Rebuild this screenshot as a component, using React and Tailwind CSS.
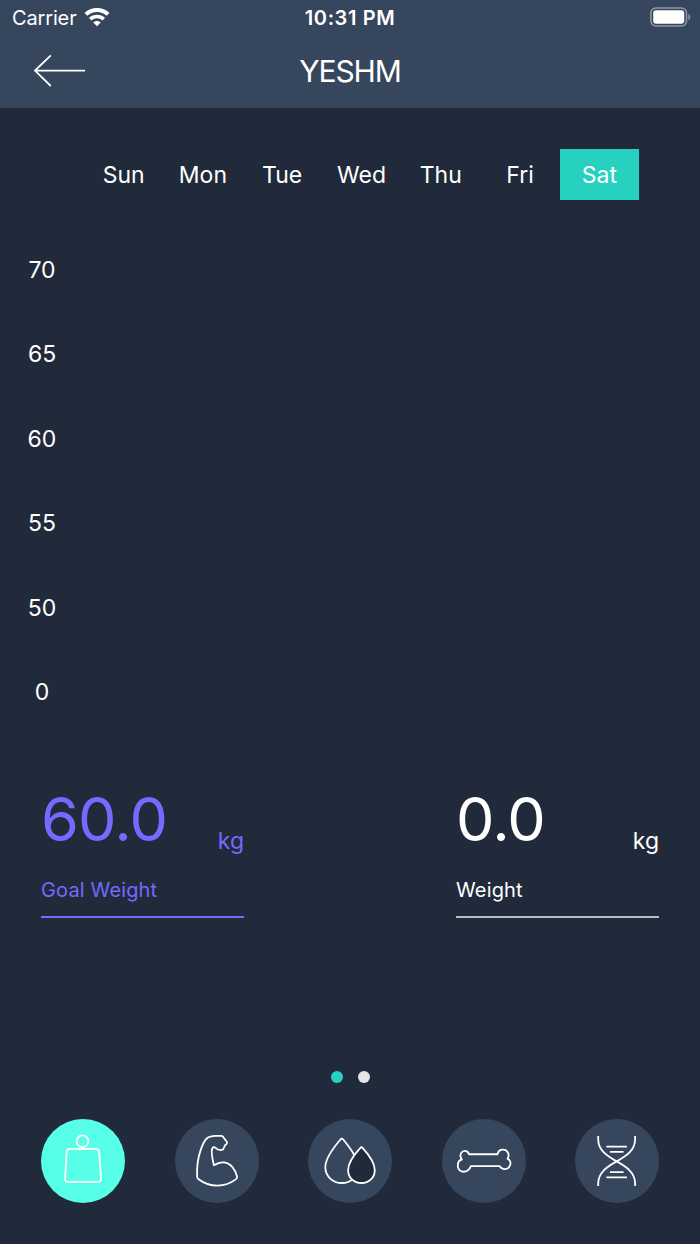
import { useState } from "react"

const days = ["Sun", "Mon", "Tue", "Wed", "Thu", "Fri", "Sat"]
const levels = ["70", "65", "60", "55", "50", "0"]

function WeightIcon() {
  return (
    <>
      <circle cx="41.7" cy="22.4" r="5.9" />
      <path d="M29 30H55.2Q58.2 30 58.4 33L60.3 60Q60.4 63.2 57.2 63.2H27.2Q24 63.2 24.2 60L25.8 33Q26 30 29 30Z" />
    </>
  )
}

function MuscleIcon() {
  return (
    <path d="M32.1 19.3C34 18 38 17.2 40.8 17H46.4Q47.4 17 48.2 17.8L52.2 23.2Q52.7 24.2 51.8 25.1Q49.6 26.5 49.4 28.3Q49 30.7 47 31.1C43.6 31.8 41.6 29.9 40.4 28.7Q39 27.5 37.8 29C35.8 31.8 37.2 38.6 39.1 46.4C46.2 42 53 43.1 57.5 48C60.2 51 61.6 54.6 62.4 58Q62.7 59.4 61.3 60.4C55.9 64.6 49.5 66.8 42.5 67C34.6 66.8 28 63.7 23.4 60.2Q22.3 59.3 22.2 57.6C21.9 48.5 22.8 40 25.5 32C27.2 26.8 29.4 21.5 32.1 19.3Z" />
  )
}

function DropsIcon() {
  return (
    <>
      <path d="M32.6 20.6Q34 18.8 35.4 20.6C42.5 29.2 50.7 40.5 50.7 48.6C50.7 57.6 43 64.3 34 64.3S17.4 57.6 17.4 48.6C17.4 40 25.2 29.2 32.6 20.6Z" />
      <path className="fill-[#212a3b]" d="M52.4 29.2Q53.7 27.6 55 29.2C61.3 36.1 67.1 44.8 67.1 51.4C67.1 58.8 61.2 64.3 53.7 64.3S40.3 58.8 40.3 51.4C40.3 44.8 46 36.1 52.4 29.2Z" />
    </>
  )
}

function BoneIcon() {
  return (
    <path d="M27.1 35.4H55.9C56.3 32.7 58.3 30.8 61.2 30.8C65.8 30.8 68.5 35.6 65.9 40C68.7 41.1 69.3 44 68.4 46.5C66.7 51.3 60.5 51.7 57.7 47.3H29C27.8 50.9 25.1 53 21.4 53C18 53 15.7 50.2 15.9 46.8C16 43.4 17.4 41 20 40.7C17.4 37.6 18.5 33.6 21.4 32.4C23.8 31.5 26.4 32.7 27.1 35.4Z" />
  )
}

function DnaIcon() {
  return (
    <path d="M23.3 17V20C23.3 31.5 32.2 37.2 41.9 42.6S60.4 53.7 60.4 65V67.4M60.4 17V20C60.4 31.5 51.6 37.2 41.9 42.6S23.3 53.7 23.3 65V67.4M31.5 27.7H52.2M35.1 33H48.8M35.1 53.4H48.8M31.5 58.7H52.2" />
  )
}

const tabs = [
  { name: "weight", Icon: WeightIcon },
  { name: "muscle", Icon: MuscleIcon },
  { name: "fat", Icon: DropsIcon },
  { name: "bone", Icon: BoneIcon },
  { name: "dna", Icon: DnaIcon },
]

function StatusBar() {
  return (
    <div className="h-9 px-[9px] grid grid-cols-3 items-center">
      <div className="pl-[3px] flex items-center gap-[7px]">
        <span className="text-[20px] leading-6 tracking-[-0.15px]">Carrier</span>
        <svg className="w-[26px] h-[20px] -mt-[2px]" viewBox="0 0 26 20" fill="none" stroke="currentColor" strokeWidth="4">
          <path d="M1.9 7.4C8 1.4 18 1.4 24.1 7.4" />
          <path d="M6.2 12.1C10 8.6 16 8.6 19.8 12.1" strokeWidth="3.6" />
          <path d="M13 19.3L9.3 15.6C11.3 13.6 14.7 13.6 16.7 15.6Z" fill="currentColor" stroke="none" />
        </svg>
      </div>
      <span className="text-center text-[20px] leading-6 font-semibold tracking-[0.6px] whitespace-nowrap">10:31 PM</span>
      <svg className="w-[41px] h-[20px] justify-self-end -mt-[2px]" viewBox="0 0 41 20" fill="none">
        <rect x="0.9" y="1" width="35.6" height="18" rx="5" className="stroke-[#8d98a6]" strokeWidth="1.6" />
        <rect x="3.2" y="3.3" width="31" height="13.4" rx="3" fill="white" />
        <path d="M38.4 7C40.9 8 40.9 12 38.4 13Z" className="fill-[#8d98a6]" />
      </svg>
    </div>
  )
}

function Reading({ value, unit, label, className, lineClass }) {
  return (
    <div className={"w-[203px] " + className}>
      <div className="flex items-baseline justify-between">
        <span className="text-[61px] leading-[72px] tracking-[-0.8px]">{value}</span>
        <span className="text-[23px] leading-8 relative top-[8px]">{unit}</span>
      </div>
      <div className="mt-[23px] text-[20px] leading-6 tracking-[0.15px]">{label}</div>
      <div className={"mt-[14px] h-[2px] " + lineClass} />
    </div>
  )
}

export default function App() {
  const [day, setDay] = useState("Sat")
  const [tab, setTab] = useState("weight")

  return (
    <div className="w-[700px] h-[1244px] bg-[#212a3a] text-white font-['Inter',sans-serif] overflow-hidden flex flex-col">
      <header className="h-[108px] bg-[#36465d] shrink-0">
        <StatusBar />
        <div className="h-[70px] px-[33px] grid grid-cols-3 items-center">
          <button>
            <svg className="w-[53px] h-[34px]" viewBox="0 0 53 34" fill="none" stroke="currentColor" strokeWidth="1.8">
              <path d="M52 16.6H1.8M17.8 1.3L2 16.6L17.8 32" />
            </svg>
          </button>
          <h1 className="text-center text-[30px] leading-9 font-normal tracking-[-1.1px] whitespace-nowrap">YESHM</h1>
        </div>
      </header>

      <div className="mt-[41px] ml-[84px] w-[555px] h-[51px] grid grid-cols-7 shrink-0">
        {days.map((d) => (
          <button key={d} onClick={() => setDay(d)}
            className={"pt-[2px] text-[23px] leading-none " + (d === day ? "bg-[#27d1c0]" : "")}>
            {d}
          </button>
        ))}
      </div>

      <div className="mt-[28px] w-[84px] h-[507px] grid grid-rows-6 items-center text-center text-[23px] leading-none shrink-0">
        {levels.map((l) => (
          <span key={l}>{l}</span>
        ))}
      </div>

      <div className="mt-[48px] px-[41px] flex justify-between shrink-0">
        <Reading value="60.0" unit="kg" label="Goal Weight" className="text-[#726bff]" lineClass="bg-[#726bff]" />
        <Reading value="0.0" unit="kg" label="Weight" className="text-white" lineClass="bg-[#b9bbbf]" />
      </div>

      <div className="mt-[153px] flex justify-center gap-[15px] shrink-0">
        <span className="size-3 rounded-full bg-[#27d1c0]" />
        <span className="size-3 rounded-full bg-[#e6e6e6]" />
      </div>

      <nav className="mt-[36px] px-[41px] flex justify-between shrink-0">
        {tabs.map(({ name, Icon }) => (
          <button key={name} onClick={() => setTab(name)}
            className={"size-[84px] rounded-full " + (name === tab ? "bg-[#58ffe8]" : "bg-[#36465d]")}>
            <svg className="size-[84px]" viewBox="0 0 84.4 84.4" fill="none" stroke="currentColor" strokeWidth="1.8" strokeLinejoin="round">
              <Icon />
            </svg>
          </button>
        ))}
      </nav>
    </div>
  )
}
